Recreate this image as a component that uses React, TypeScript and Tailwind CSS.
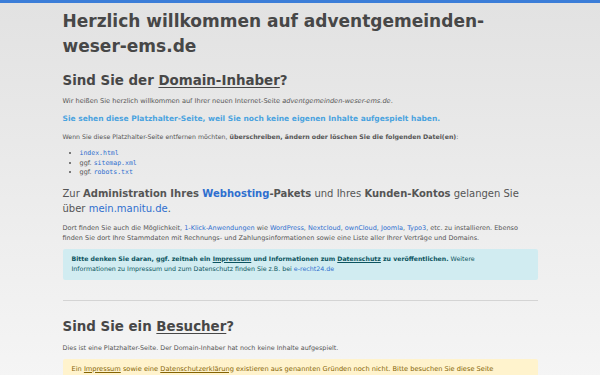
const link = "text-[#2f6fcf]";

function Code({ children }: { children: string }) {
  return <code className="font-['DejaVu_Sans_Mono',monospace] text-[#2f6fcf]">{children}</code>;
}

export default function App() {
  return (
    <div className="min-h-screen border-t-[3px] border-[#3b7dd8] bg-[linear-gradient(#e2e2e2,#f5f5f5_375px)] font-['DejaVu_Sans',sans-serif] text-[#555]">
      <div className="mx-auto w-[475px] pt-[6px] pb-10">
        <h1 className="text-[17px] font-bold leading-[25px] text-[#474747]">
          Herzlich willkommen auf adventgemeinden-weser-ems.de
        </h1>

        {/* Inhaber */}
        <h2 className="mt-[12px] text-[13.4px] font-bold leading-[20px] text-[#474747]">
          Sind Sie der <span className="underline underline-offset-2">Domain-Inhaber</span>?
        </h2>
        <p className="mt-[5px] text-[6.6px] leading-[10px]">
          Wir heißen Sie herzlich willkommen auf Ihrer neuen Internet-Seite{" "}
          <em>adventgemeinden-weser-ems.de</em>.
        </p>
        <p className="mt-[8px] text-[7.5px] font-bold leading-[10px] text-[#4aa3df]">
          Sie sehen diese Platzhalter-Seite, weil Sie noch keine eigenen Inhalte aufgespielt haben.
        </p>
        <p className="mt-[8px] text-[6.25px] leading-[10px]">
          Wenn Sie diese Platzhalter-Seite entfernen möchten,{" "}
          <strong>überschreiben, ändern oder löschen Sie die folgenden Datei(en)</strong>:
        </p>
        <ul className="mt-[7px] list-disc pl-[17px] text-[6.5px] leading-[9.5px]">
          <li><Code>index.html</Code></li>
          <li>ggf. <Code>sitemap.xml</Code></li>
          <li>ggf. <Code>robots.txt</Code></li>
        </ul>

        <p className="mt-[8px] text-[10px] leading-[15px]">
          Zur <strong>Administration Ihres <span className={link}>Webhosting</span>-Pakets</strong> und Ihres{" "}
          <strong>Kunden-Kontos</strong> gelangen Sie über <span className={link}>mein.manitu.de</span>.
        </p>
        <p className="mt-[7px] text-[6.5px] leading-[10px]">
          Dort finden Sie auch die Möglichkeit, <span className={link}>1-Klick-Anwendungen</span> wie{" "}
          <span className={link}>WordPress</span>, <span className={link}>Nextcloud</span>,{" "}
          <span className={link}>ownCloud</span>, <span className={link}>Joomla</span>,{" "}
          <span className={link}>Typo3</span>, etc. zu installieren. Ebenso
          <br />
          finden Sie dort Ihre Stammdaten mit Rechnungs- und Zahlungsinformationen sowie eine Liste aller Ihrer
          Verträge und Domains.
        </p>

        <div className="mt-[6px] rounded-[2px] bg-[#d1ecf1] px-[9px] py-[5px] text-[6.3px] leading-[10.5px] text-[#0c5460]">
          <strong className="text-[6.2px]">
            Bitte denken Sie daran, ggf. zeitnah ein <span className="underline">Impressum</span> und
            Informationen zum <span className="underline">Datenschutz</span> zu veröffentlichen.
          </strong>{" "}
          Weitere
          <br />
          Informationen zu Impressum und zum Datenschutz finden Sie z.B. bei{" "}
          <span className={link}>e-recht24.de</span>
        </div>

        <hr className="mt-[20px] border-t border-[#d4d4d4]" />

        {/* Besucher */}
        <h2 className="mt-[16px] text-[13.4px] font-bold leading-[20px] text-[#474747]">
          Sind Sie ein <span className="underline underline-offset-2">Besucher</span>?
        </h2>
        <p className="mt-[6px] text-[6.4px] leading-[10px]">
          Dies ist eine Platzhalter-Seite. Der Domain-Inhaber hat noch keine Inhalte aufgespielt.
        </p>
        <div className="mt-[6px] rounded-[2px] bg-[#fff3cd] px-[9px] py-[5px] text-[6.65px] leading-[10.5px] text-[#856404]">
          Ein <span className="underline">Impressum</span> sowie eine{" "}
          <span className="underline">Datenschutzerklärung</span> existieren aus genannten Gründen noch nicht.
          Bitte besuchen Sie diese Seite
          <br />
          zu einem späteren Zeitpunkt erneut.
        </div>
      </div>
    </div>
  );
}
